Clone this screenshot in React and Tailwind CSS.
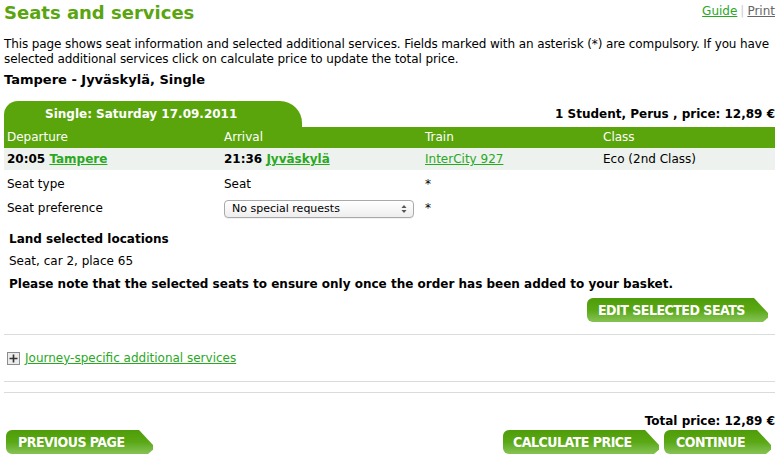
import React from "react";

function GreenButton({ label, className = "" }) {
  return (
    <button
      className={`relative h-[24px] whitespace-nowrap rounded-l-[6px] rounded-br-[4px] bg-gradient-to-b from-[#4f9c0b] via-[#5aa812] to-[#86c352] text-white font-bold text-[14px] leading-[24px] uppercase tracking-[-0.5px] [font-family:'DejaVu_Sans_Condensed','DejaVu_Sans',sans-serif] [clip-path:polygon(0_0,calc(100%-14px)_0,100%_62%,100%_82%,calc(100%-5px)_100%,0_100%)] ${className}`}
    >
      {label}
    </button>
  );
}

export default function App() {
  return (
    <div className="w-[779px] h-[465px] overflow-hidden bg-white text-[12px] leading-[15px] text-black [font-family:'DejaVu_Sans',Verdana,sans-serif]">
      <div className="pl-[4px] pr-[4px]">
        <div className="flex justify-between items-start pt-[3px]">
          <h1 className="text-[18px] leading-[20px] font-bold text-[#5aa50f]">Seats and services</h1>
          <div className="text-[12px] leading-[14px] pt-[1px] flex items-center">
            <a className="text-[#2aa81f] underline">Guide</a>
            <span className="text-[#cccccc] px-[3px]">|</span>
            <a className="text-[#666666] underline">Print</a>
          </div>
        </div>
        <p className="mt-[14px] tracking-[-0.1px]">
          This page shows seat information and selected additional services. Fields marked with an asterisk (*) are compulsory. If you have selected additional services click on calculate price to update the total price.
        </p>
        <div className="font-bold text-[13px] mt-[5px]">Tampere - Jyväskylä, Single</div>

        <div className="flex justify-between items-end mt-[14px]">
          <div className="w-[298px] h-[26px] bg-[#5aa50c] rounded-tl-[14px] rounded-tr-[22px] text-white font-bold leading-[26px] pl-[41px]">
            Single: Saturday 17.09.2011
          </div>
          <div className="font-bold pb-[5px]">1 Student, Perus , price: 12,89 €</div>
        </div>
        <div className="grid grid-cols-[217px_201px_178px_1fr] bg-[#5aa50c] text-white h-[21px] leading-[20px] px-[3px]">
          <div>Departure</div>
          <div>Arrival</div>
          <div>Train</div>
          <div>Class</div>
        </div>
        <div className="grid grid-cols-[217px_201px_178px_1fr] bg-[#eef2ee] h-[22px] leading-[22px] px-[3px]">
          <div className="font-bold">20:05 <a className="text-[#2aa81f] underline">Tampere</a></div>
          <div className="font-bold">21:36 <a className="text-[#2aa81f] underline">Jyväskylä</a></div>
          <div><a className="text-[#2aa81f] underline">InterCity 927</a></div>
          <div>Eco (2nd Class)</div>
        </div>
        <div className="grid grid-cols-[217px_201px_1fr] px-[3px] mt-[4px] h-[21px] items-center">
          <div>Seat type</div>
          <div>Seat</div>
          <div>*</div>
        </div>
        <div className="grid grid-cols-[217px_201px_1fr] px-[3px] h-[27px] items-center">
          <div>Seat preference</div>
          <div className="w-[190px] h-[18px] rounded-[4px] border border-[#a9a9a9] bg-gradient-to-b from-white to-[#eeeeee] text-[11px] leading-[16px] pl-[7px] flex justify-between items-center pr-[6px] shadow-[0_1px_0_rgba(0,0,0,0.05)]">
            <span>No special requests</span>
            <svg width="6" height="10" viewBox="0 0 6 10">
              <path d="M3 1 L5.5 4 L0.5 4 Z" fill="#555" />
              <path d="M3 9 L5.5 6 L0.5 6 Z" fill="#555" />
            </svg>
          </div>
          <div>*</div>
        </div>
        <div className="pl-[5px] mt-[10px]">
          <div className="font-bold leading-[14px]">Land selected locations</div>
          <div className="mt-[8px]">Seat, car 2, place 65</div>
          <div className="font-bold mt-[8px]">Please note that the selected seats to ensure only once the order has been added to your basket.</div>
        </div>
        <div className="flex justify-end mt-[6px] pr-[7px]">
          <GreenButton label="Edit selected seats" className="w-[181px] pl-[11px] text-left" />
        </div>
        <div className="border-t border-[#d8dcdc] mt-[12px]" />
        <div className="flex items-center h-[46px] pl-[3px]">
          <span className="w-[13px] h-[13px] border border-[#8c8c8c] bg-[#ececec] flex items-center justify-center">
            <svg width="9" height="9" viewBox="0 0 9 9">
              <path d="M4.5 0.5 V8.5 M0.5 4.5 H8.5" stroke="#333" strokeWidth="1.6" />
            </svg>
          </span>
          <a className="ml-[5px] text-[#2aa81f] underline">Journey-specific additional services</a>
        </div>
        <div className="border-t border-[#d8dcdc]" />
        <div className="border-t border-[#d8dcdc] mt-[10px]" />
        <div className="text-right font-bold mt-[21px]">Total price: 12,89 €</div>
        <div className="flex justify-between items-center mt-[1px] pl-[2px] pr-[4px]">
          <GreenButton label="Previous page" className="w-[147px] pl-[12px] text-left" />
          <div className="flex gap-[5px]">
            <GreenButton label="Calculate price" className="w-[156px] pl-[10px] text-left" />
            <GreenButton label="Continue" className="w-[107px] pl-[12px] text-left" />
          </div>
        </div>
      </div>
    </div>
  );
}
